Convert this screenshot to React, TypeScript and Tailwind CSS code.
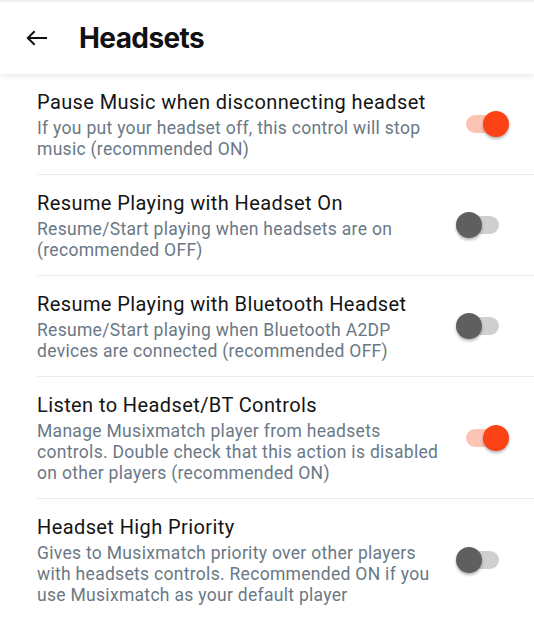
import React, { useState } from "react";

type Item = { title: string; desc: string; on: boolean };

const items: Item[] = [
  {
    title: "Pause Music when disconnecting headset",
    desc: "If you put your headset off, this control will stop music (recommended ON)",
    on: true,
  },
  {
    title: "Resume Playing with Headset On",
    desc: "Resume/Start playing when headsets are on (recommended OFF)",
    on: false,
  },
  {
    title: "Resume Playing with Bluetooth Headset",
    desc: "Resume/Start playing when Bluetooth A2DP devices are connected (recommended OFF)",
    on: false,
  },
  {
    title: "Listen to Headset/BT Controls",
    desc: "Manage Musixmatch player from headsets controls. Double check that this action is disabled on other players (recommended ON)",
    on: true,
  },
  {
    title: "Headset High Priority",
    desc: "Gives to Musixmatch priority over other players with headsets controls. Recommended ON if you use Musixmatch as your default player",
    on: false,
  },
];

function Toggle({ on, onClick }: { on: boolean; onClick: () => void }) {
  return (
    <button
      type="button"
      onClick={onClick}
      className={`relative ml-[24px] h-[18px] w-[33px] shrink-0 rounded-full ${
        on ? "bg-[#fdc3b3]" : "bg-[#cfcfd1]"
      }`}
    >
      <span
        className={`absolute top-1/2 h-[26px] w-[26px] -translate-y-1/2 rounded-full shadow-[0_2px_3px_rgba(0,0,0,0.3)] ${
          on ? "left-[16.5px] bg-[#fc4316]" : "left-[-10px] bg-[#5f5f5f]"
        }`}
      />
    </button>
  );
}

export default function App() {
  const [state, setState] = useState(items.map((i) => i.on));
  return (
    <div className="min-h-[619px] w-[534px] bg-white font-['Roboto',sans-serif]">
      <header className="relative z-10 flex h-[74px] items-center border-t-[2px] border-[#efefef] bg-white shadow-[0_3px_6px_rgba(0,0,0,0.07)]">
        <div className="ml-[26px] flex h-[16px] w-[22px] items-center">
          <svg width="22" height="16" viewBox="0 0 22 16" fill="none">
            <path
              d="M21 8H1.8M8.6 1.2L1.8 8l6.8 6.8"
              stroke="#111"
              strokeWidth="2"
              strokeLinecap="butt"
              strokeLinejoin="miter"
            />
          </svg>
        </div>
        <h1 className="ml-[31px] font-['Inter',sans-serif] text-[28px] font-bold leading-none tracking-[-0.6px] text-[#111]">
          Headsets
        </h1>
      </header>
      <div className="flex flex-col">
        {items.map((it, i) => (
          <div
            key={it.title}
            className={`ml-[37px] flex items-center pr-[35px] ${
              i < items.length - 1 ? "border-b border-[#ececec]" : ""
            }`}
          >
            <div className="min-w-0 flex-1 pb-[14px] pt-[16px]">
              <div className="text-[20px] leading-[24px] tracking-[0.4px] text-[#141414]">{it.title}</div>
              <div className="mt-[4px] text-[17.5px] leading-[21px] tracking-[0.3px] text-[#6a7885]">
                {it.desc}
              </div>
            </div>
            <Toggle
              on={state[i]}
              onClick={() => setState((s) => s.map((v, j) => (j === i ? !v : v)))}
            />
          </div>
        ))}
      </div>
    </div>
  );
}
